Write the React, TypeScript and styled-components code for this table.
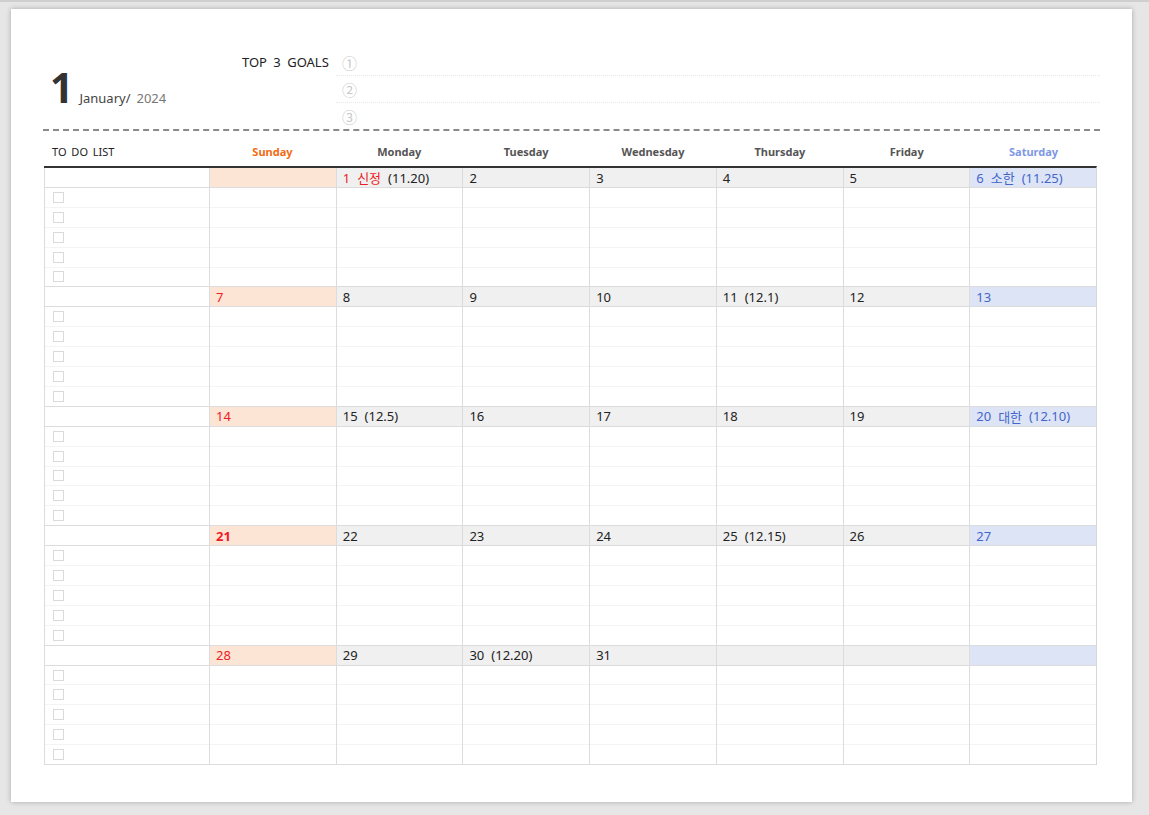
import React from "react";
import styled, { createGlobalStyle } from "styled-components";

const Global = createGlobalStyle`
  html, body { margin: 0; padding: 0; }
  body {
    background: #e6e6e6;
    border-top: 2px solid #cfcfcf;
    font-family: "Noto Sans", "Noto Sans CJK KR", sans-serif;
    color: #222;
  }
  * { box-sizing: border-box; }
`;

const Paper = styled.div`
  margin: 7px 0 13px 11px;
  width: 1121px;
  height: 793px;
  background: #fff;
  box-shadow: 0 0 5px rgba(0, 0, 0, 0.28);
  padding: 40px 32px 0 32px;
`;

const Header = styled.div`
  display: flex;
  height: 82px;
  border-bottom: 2px dashed #8a8a8a;
`;

const MonthBlock = styled.div`
  width: 199px;
  display: flex;
  align-items: baseline;
  padding: 17px 0 0 7px;
`;

const MonthNum = styled.span`
  font-size: 41px;
  line-height: 42px;
  font-weight: 700;
  color: #333;
`;

const MonthName = styled.span`
  font-size: 13px;
  color: #444;
  margin-left: 6px;
`;

const Year = styled.span`
  font-size: 13px;
  color: #777;
  margin-left: 6px;
`;

const GoalsLabel = styled.div`
  width: 94px;
  font-size: 13px;
  line-height: 27px;
  word-spacing: 3px;
  color: #222;
`;

const GoalsList = styled.div`
  flex: 1;
  display: flex;
  flex-direction: column;
`;

const GoalRow = styled.div<{ $last?: boolean }>`
  height: ${(p) => (p.$last ? 26 : 27)}px;
  border-bottom: ${(p) => (p.$last ? "none" : "1px dotted #e8e8e8")};
  padding-left: 6px;
  display: flex;
  align-items: center;
  font-size: 15px;
  color: #c8c8c8;
  font-family: "Noto Sans CJK KR", sans-serif;
`;

const DayHeaderRow = styled.div`
  display: grid;
  grid-template-columns: 165px repeat(7, 1fr);
  width: 1053px;
  margin-left: 1px;
  height: 35px;
  align-items: center;
  padding-top: 6px;
`;

const TodoTitle = styled.div`
  font-size: 11px;
  word-spacing: 2px;
  color: #222;
  padding-left: 8px;
`;

const DayName = styled.div<{ $color: string }>`
  text-align: center;
  font-size: 11px;
  font-weight: 700;
  color: ${(p) => p.$color};
`;

const Table = styled.div`
  width: 1053px;
  margin-left: 1px;
  border-top: 2px solid #333;
  border-right: 1px solid #d6d6d6;
`;

const Week = styled.div`
  display: grid;
  grid-template-columns: 165px repeat(7, 1fr);
  height: 119.4px;
  border-bottom: 1px solid #dcdcdc;
`;

const Column = styled.div`
  display: flex;
  flex-direction: column;
  border-left: 1px solid #dcdcdc;
  min-width: 0;
`;

const DateCell = styled.div<{ $bg: string; $color: string; $bold?: boolean }>`
  height: 20px;
  flex: none;
  background: ${(p) => p.$bg};
  color: ${(p) => p.$color};
  border-bottom: 1px solid #dcdcdc;
  padding-left: 6px;
  display: flex;
  align-items: center;
  font-size: 13px;
  font-weight: ${(p) => (p.$bold ? 700 : 400)};
  white-space: nowrap;
  font-family: "Noto Sans", "Noto Sans CJK KR", sans-serif;
`;

const Extra = styled.span<{ $color?: string }>`
  margin-left: 7px;
  color: ${(p) => p.$color || "inherit"};
`;

const Line = styled.div<{ $last?: boolean }>`
  flex: 1;
  border-bottom: ${(p) => (p.$last ? "none" : "1px solid #f4f4f4")};
  display: flex;
  align-items: center;
  padding-left: 8px;
`;

const Check = styled.span`
  width: 11px;
  height: 11px;
  border: 1px solid #dadada;
  background: #fff;
`;

type Day = { n?: string; name?: string; lunar?: string; bold?: boolean };

const weeks: Day[][] = [
  [{}, { n: "1", name: "신정", lunar: "(11.20)" }, { n: "2" }, { n: "3" }, { n: "4" }, { n: "5" }, { n: "6", name: "소한", lunar: "(11.25)" }],
  [{ n: "7" }, { n: "8" }, { n: "9" }, { n: "10" }, { n: "11", lunar: "(12.1)" }, { n: "12" }, { n: "13" }],
  [{ n: "14" }, { n: "15", lunar: "(12.5)" }, { n: "16" }, { n: "17" }, { n: "18" }, { n: "19" }, { n: "20", name: "대한", lunar: "(12.10)" }],
  [{ n: "21", bold: true }, { n: "22" }, { n: "23" }, { n: "24" }, { n: "25", lunar: "(12.15)" }, { n: "26" }, { n: "27" }],
  [{ n: "28" }, { n: "29" }, { n: "30", lunar: "(12.20)" }, { n: "31" }, {}, {}, {}],
];

const dayNames = [
  { label: "Sunday", color: "#f36a12" },
  { label: "Monday", color: "#555" },
  { label: "Tuesday", color: "#555" },
  { label: "Wednesday", color: "#555" },
  { label: "Thursday", color: "#555" },
  { label: "Friday", color: "#555" },
  { label: "Saturday", color: "#7d98e4" },
];

const lines = [0, 1, 2, 3, 4];

function dayStyle(i: number, d: Day) {
  if (i === 0) return { bg: "#fde5d6", color: "#ee1c25" };
  if (i === 6) return { bg: "#dde4f5", color: "#4466cc" };
  return { bg: "#f0f0f0", color: d.name ? "#ee1c25" : "#222" };
}

export default function App() {
  return (
    <>
      <Global />
      <Paper>
        <Header>
          <MonthBlock>
            <MonthNum>1</MonthNum>
            <MonthName>January/</MonthName>
            <Year>2024</Year>
          </MonthBlock>
          <GoalsLabel>TOP 3 GOALS</GoalsLabel>
          <GoalsList>
            <GoalRow>①</GoalRow>
            <GoalRow>②</GoalRow>
            <GoalRow $last>③</GoalRow>
          </GoalsList>
        </Header>
        <DayHeaderRow>
          <TodoTitle>TO DO LIST</TodoTitle>
          {dayNames.map((d) => (
            <DayName key={d.label} $color={d.color}>
              {d.label}
            </DayName>
          ))}
        </DayHeaderRow>
        <Table>
          {weeks.map((week, wi) => (
            <Week key={wi}>
              <Column>
                <DateCell $bg="#fff" $color="#222" />
                {lines.map((l) => (
                  <Line key={l} $last={l === 4}>
                    <Check />
                  </Line>
                ))}
              </Column>
              {week.map((d, i) => {
                const s = dayStyle(i, d);
                return (
                  <Column key={i}>
                    <DateCell $bg={s.bg} $color={s.color} $bold={d.bold}>
                      {d.n}
                      {d.name && <Extra>{d.name}</Extra>}
                      {d.lunar && (
                        <Extra $color={i === 6 ? undefined : "#222"}>{d.lunar}</Extra>
                      )}
                    </DateCell>
                    {lines.map((l) => (
                      <Line key={l} $last={l === 4} />
                    ))}
                  </Column>
                );
              })}
            </Week>
          ))}
        </Table>
      </Paper>
    </>
  );
}
